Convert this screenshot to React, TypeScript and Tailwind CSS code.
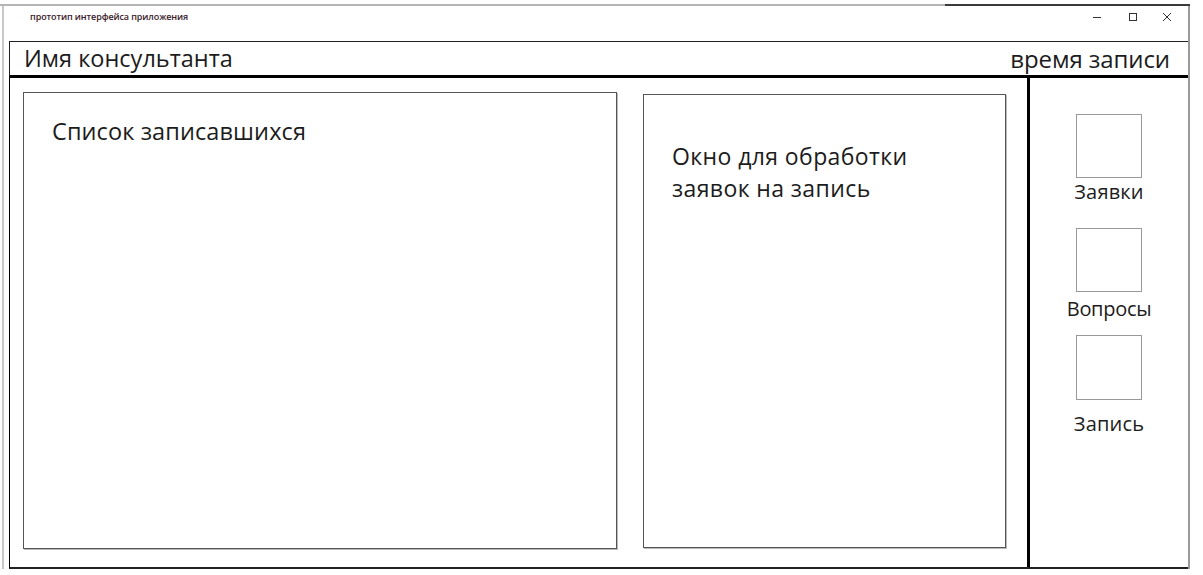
import React from "react";

const font = { fontFamily: '"Open Sans", "Noto Sans", sans-serif' };

export default function App() {
  return (
    <div
      className="w-[1203px] h-[575px] bg-white flex flex-col pt-[4px] text-[#1c1c1c] overflow-hidden"
      style={font}
    >
      {/* top border */}
      <div className="flex h-[2px] w-[1190px]">
        <div className="w-[945px] bg-[#b5b5b5]" />
        <div className="flex-1 bg-[#3a3a3a]" />
      </div>
      <div className="flex h-[563px]">
        {/* left ruler strip */}
        <div className="ml-[2px] w-[7px] border-l-2 border-[#c8c8c8]" />
        {/* main window */}
        <div className="w-[1181px] flex flex-col border-r-2 border-[#9a9a9a]">
          {/* title bar */}
          <div className="h-[35px] flex items-start pt-[1px]">
            <div className="pl-[21px] h-[20px] flex items-center text-[9px] font-semibold text-[#3a1a2a] tracking-[-0.1px]">
              прототип интерфейса приложения
            </div>
            <div className="ml-auto flex items-center h-[20px] pr-[16px] text-[#333]">
              <svg width="10" height="10" viewBox="0 0 10 10" className="mr-[26px]">
                <line x1="1" y1="5.5" x2="9" y2="5.5" stroke="#333" strokeWidth="1" />
              </svg>
              <svg width="10" height="10" viewBox="0 0 10 10" className="mr-[24px]">
                <rect x="1.5" y="1.5" width="7" height="7" fill="none" stroke="#333" strokeWidth="1" />
              </svg>
              <svg width="10" height="10" viewBox="0 0 10 10">
                <line x1="1" y1="1" x2="9" y2="9" stroke="#333" strokeWidth="1" />
                <line x1="9" y1="1" x2="1" y2="9" stroke="#333" strokeWidth="1" />
              </svg>
            </div>
          </div>
          {/* header */}
          <div className="h-[37px] border-t border-l border-[#222] border-b-[3px] border-b-black flex items-center justify-between pl-[14px] pr-[18px]">
            <span className="text-[23.5px] leading-none">Имя консультанта</span>
            <span className="text-[24px] leading-none tracking-[-0.1px]">время записи</span>
          </div>
          {/* content */}
          <div className="flex-1 flex border-l border-black border-b-2 border-b-[#222]">
            <div className="w-[1017px] flex items-start pl-[13px] pt-[14px]">
              <div className="w-[594px] h-[457px] border border-[#555] shadow-[1px_1px_0_#bbb] pl-[28px] pt-[24px]">
                <div className="text-[23.5px] leading-[28px] tracking-[0.1px]">Список записавшихся</div>
              </div>
              <div className="ml-[26px] mt-[2px] w-[363px] h-[454px] border border-[#555] shadow-[1px_1px_0_#bbb] pl-[28px] pt-[45px]">
                <div className="text-[23px] leading-[32px] tracking-[0.4px]">
                  Окно для обработки
                  <br />
                  заявок на запись
                </div>
              </div>
            </div>
            <div className="w-[3px] bg-black" />
            <div className="flex-1 flex flex-col items-center">
              <div className="mt-[36px] w-[66px] h-[64px] border border-[#999]" />
              <div className="mt-[1px] text-[20px] leading-[26px] tracking-[0.2px]">Заявки</div>
              <div className="mt-[23px] w-[66px] h-[64px] border border-[#999]" />
              <div className="mt-[4px] text-[20px] leading-[26px] tracking-[-0.3px]">Вопросы</div>
              <div className="mt-[13px] w-[66px] h-[65px] border border-[#999]" />
              <div className="mt-[11px] text-[20px] leading-[26px] tracking-[0.2px]">Запись</div>
            </div>
          </div>
        </div>
      </div>
    </div>
  );
}
